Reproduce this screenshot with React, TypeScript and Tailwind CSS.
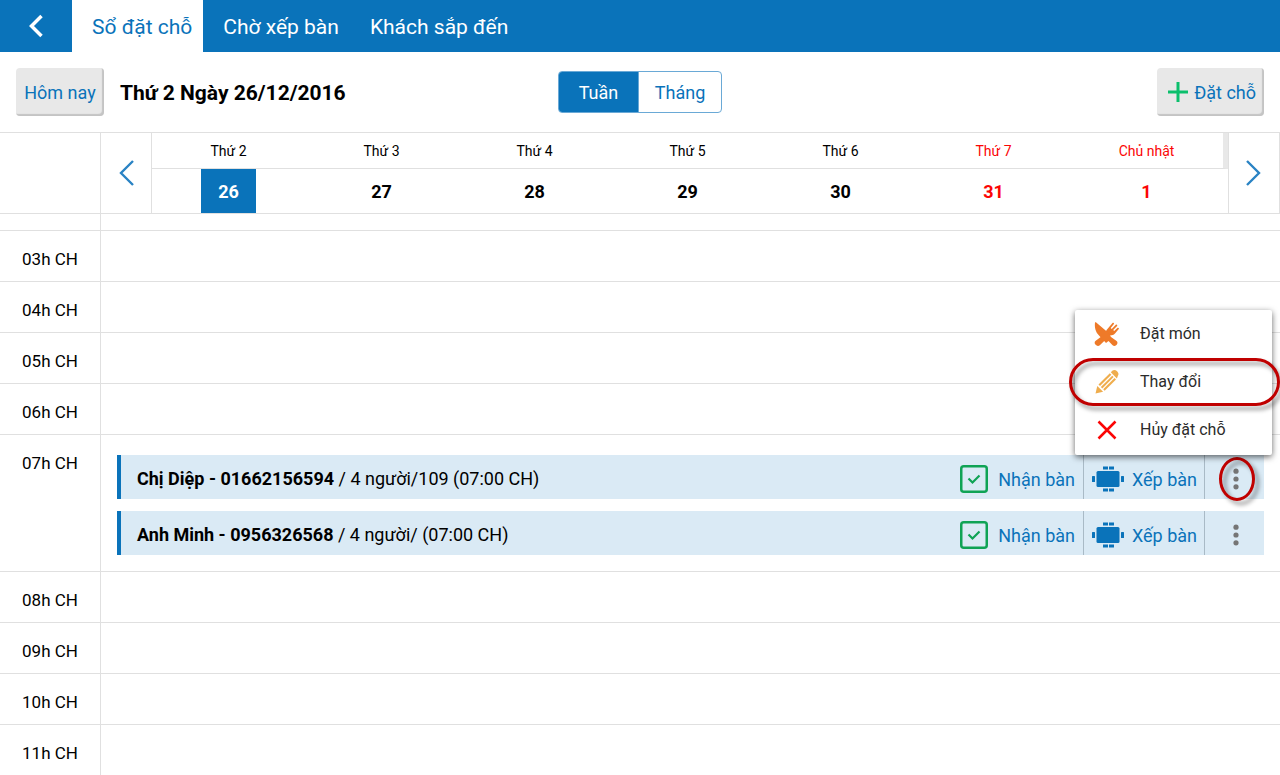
import React, { useState } from 'react';

interface Day {
  label: string;
  date: string;
  weekend?: boolean;
}

interface Booking {
  id: number;
  customer: string;
  detail: string;
}

interface Slot {
  label: string;
  bookings?: Booking[];
}

const TABS = ['Sổ đặt chỗ', 'Chờ xếp bàn', 'Khách sắp đến'];

const DAYS: Day[] = [
  { label: 'Thứ 2', date: '26' },
  { label: 'Thứ 3', date: '27' },
  { label: 'Thứ 4', date: '28' },
  { label: 'Thứ 5', date: '29' },
  { label: 'Thứ 6', date: '30' },
  { label: 'Thứ 7', date: '31', weekend: true },
  { label: 'Chủ nhật', date: '1', weekend: true },
];

const SLOTS: Slot[] = [
  { label: '03h CH' },
  { label: '04h CH' },
  { label: '05h CH' },
  { label: '06h CH' },
  {
    label: '07h CH',
    bookings: [
      { id: 1, customer: 'Chị Diệp - 01662156594', detail: ' / 4 người/109 (07:00 CH)' },
      { id: 2, customer: 'Anh Minh - 0956326568', detail: ' / 4 người/ (07:00 CH)' },
    ],
  },
  { label: '08h CH' },
  { label: '09h CH' },
  { label: '10h CH' },
  { label: '11h CH' },
];

const BackIcon = () => (
  <svg width="16" height="24" viewBox="0 0 16 24" fill="none" stroke="currentColor" strokeWidth="3.5">
    <path d="M13.5 2 3.5 12l10 10" />
  </svg>
);

const ArrowIcon = ({ flip }: { flip?: boolean }) => (
  <svg width="16" height="28" viewBox="0 0 16 28" fill="none" stroke="#2a83c4" strokeWidth="2.4">
    <path d={flip ? 'M1 2l12 12L1 26' : 'M15 2 3 14l12 12'} />
  </svg>
);

const PlusIcon = () => (
  <svg width="22" height="22" viewBox="0 0 22 22" fill="none" stroke="#0bbf6c" strokeWidth="3">
    <path d="M11 1v20M1 11h20" />
  </svg>
);

const CheckIcon = () => (
  <svg width="28" height="28" viewBox="0 0 28 28" fill="none" stroke="#0fa355">
    <rect x="1.25" y="1.25" width="25.5" height="25.5" rx="2.5" strokeWidth="2.5" />
    <path d="M8.5 13.5l4 4 7-7" strokeWidth="2.2" />
  </svg>
);

const TableIcon = () => (
  <svg width="32" height="26" viewBox="0 0 32 26" fill="#0a73ba">
    <rect x="4.5" y="5" width="23" height="16" rx="1.5" />
    <rect x="11" y="0.5" width="5" height="3" />
    <rect x="17" y="0.5" width="5" height="3" />
    <rect x="11" y="22.5" width="5" height="3" />
    <rect x="17" y="22.5" width="5" height="3" />
    <rect x="0" y="10" width="3" height="6" rx="0.5" />
    <rect x="29" y="10" width="3" height="6" rx="0.5" />
  </svg>
);

const MoreIcon = () => (
  <svg width="6" height="22" viewBox="0 0 6 22" fill="#757575">
    <circle cx="3" cy="3.2" r="2.6" />
    <circle cx="3" cy="11" r="2.6" />
    <circle cx="3" cy="18.8" r="2.6" />
  </svg>
);

const CutleryIcon = () => (
  <svg width="26" height="26" viewBox="0 0 26 26" fill="#ee7a29">
    {/* fork */}
    <path d="M13 8.500 18.500 2c.6-.8 2 .2 1.400 1.100L16.700 7l1 1 4.100-4.300c.8-.7 2 .3 1.300 1.200L19.200 9l1 1 3.400-3.200c.8-.6 1.800.5 1.200 1.300L21 12.500c-1.500 1.600-3.300 2-5 1.900L5.800 24.300c-1 1-2.500 1-3.500 0l-.9-.9c-1-1-1-2.500 0-3.500L12 12c-.3-1.300.1-2.500 1-3.500z" />
    {/* knife */}
    <path d="M1 1.500c.3-.3 1-.2 1.500.3L14 11.500l3 4.500 5.600 4c1.100.9 1.200 2.400.3 3.400l-.8.8c-1 1-2.500 1-3.500 0L14.500 20 12 22 5 14.500C1.500 11 .4 6 1 1.500z" />
  </svg>
);

const PencilIcon = () => (
  <svg width="26" height="26" viewBox="0 0 26 26" fill="#efad4d">
    <path d="M1.500 24.500 3.300 17l5.800 5.700z" />
    <path d="M4.500 15.600 15.800 4.300l1.500 1.500L6 17.100z" />
    <path d="M6.900 18 18.200 6.700l1.400 1.400L8.300 19.400z" />
    <path d="M9.200 20.300 20.500 9l1.500 1.500-11.300 11.300z" />
    <path d="M16.800 3.300 18.600 1.500c1.200-1 3-.8 4.500.7s1.800 3.300.8 4.500L22.900 9.400z" />
  </svg>
);

const CrossIcon = () => (
  <svg width="26" height="26" viewBox="0 0 26 26" fill="none" stroke="#fb0505" strokeWidth="2.500">
    <path d="M4.500 4.500l17 17M21.500 4.500l-17 17" />
  </svg>
);

const MENU_ITEMS = [
  { label: 'Đặt món', icon: <CutleryIcon /> },
  { label: 'Thay đổi', icon: <PencilIcon />, highlighted: true },
  { label: 'Hủy đặt chỗ', icon: <CrossIcon /> },
];

const BookingMenu = () => (
  <div
    role="menu"
    className="absolute bottom-full -right-2 z-10 w-[197px] rounded-xs bg-white pb-px shadow-[0_2px_6px_rgba(0,0,0,0.6)]"
  >
    {MENU_ITEMS.map((item) => (
      <button
        key={item.label}
        role="menuitem"
        className="relative flex h-12 w-full items-center gap-5 pl-[19px] text-base text-[#2b2b2b]"
      >
        {item.icon}
        {item.label}
        {item.highlighted && (
          <span className="pointer-events-none absolute -left-1.5 -right-2 top-0 h-12 rounded-full border-3 border-[#c00000] drop-shadow-[3px_4px_2px_rgba(0,0,0,0.4)]" />
        )}
      </button>
    ))}
  </div>
);

interface BookingRowProps {
  booking: Booking;
  menuOpen: boolean;
  onToggleMenu: () => void;
}

const BookingRow: React.FC<BookingRowProps> = ({ booking, menuOpen, onToggleMenu }) => (
  <div className="relative flex h-11 items-stretch border-l-4 border-[#0a73ba] bg-[#daeaf5]">
    <p className="flex-1 self-center whitespace-pre pl-4 pt-1 text-lg text-black">
      <strong className="font-bold">{booking.customer}</strong>
      {booking.detail}
    </p>
    <button className="flex items-center gap-2.5 px-2 pt-1 text-lg text-[#0a73ba]">
      <CheckIcon />
      <span className="pt-0.5">Nhận bàn</span>
    </button>
    <button className="flex items-center gap-2 border-x border-[#a9bac6] pl-2 pr-[7px] pt-1 text-lg text-[#0a73ba]">
      <TableIcon />
      <span className="pt-0.5">Xếp bàn</span>
    </button>
    <button
      aria-label="Thêm"
      onClick={onToggleMenu}
      className="relative flex w-[59px] items-center justify-center pl-0.5 pt-1"
    >
      <MoreIcon />
      {menuOpen && (
        <span className="pointer-events-none absolute left-3.5 top-0.5 h-11 w-9 rounded-[50%] border-3 border-[#c00000] drop-shadow-[4px_4px_2px_rgba(0,0,0,0.4)]" />
      )}
    </button>
    {menuOpen && <BookingMenu />}
  </div>
);

const App: React.FC = () => {
  const [activeTab, setActiveTab] = useState(TABS[0]);
  const [view, setView] = useState<'week' | 'month'>('week');
  const [selectedDate, setSelectedDate] = useState('26');
  const [openMenu, setOpenMenu] = useState<number | null>(1);

  return (
    <div className="min-h-screen overflow-x-hidden bg-white font-['Roboto',sans-serif] text-black">
      <header className="flex h-13 bg-[#0a73ba]">
        <button aria-label="Quay lại" className="flex w-18 items-center justify-center text-white">
          <BackIcon />
        </button>
        <nav className="flex">
          {TABS.map((tab) => (
            <button
              key={tab}
              onClick={() => setActiveTab(tab)}
              className={`pl-5 pr-[11px] pt-1 text-[21px] ${
                tab === activeTab ? 'bg-white text-[#0a73ba]' : 'text-white'
              }`}
            >
              {tab}
            </button>
          ))}
        </nav>
      </header>

      {/* Toolbar */}
      <div className="grid h-20 grid-cols-[1fr_auto_1fr] items-center px-4">
        <div className="flex items-center gap-4">
          <button className="h-12 w-22 rounded-sm bg-[#e8e8e8] pt-0.5 text-lg text-[#0a73ba] shadow-[inset_-2px_-2px_1px_#c4c4c4]">
            Hôm nay
          </button>
          <h1 className="pt-1 text-[21px] font-bold">Thứ 2 Ngày 26/12/2016</h1>
        </div>
        <div className="flex h-[42px] overflow-hidden rounded-sm border border-[#6aa9d6]">
          <button
            onClick={() => setView('week')}
            className={`w-[79px] pt-0.5 text-lg ${view === 'week' ? 'bg-[#0a73ba] text-white' : 'text-[#0a73ba]'}`}
          >
            Tuần
          </button>
          <button
            onClick={() => setView('month')}
            className={`w-[83px] border-l border-[#6aa9d6] pt-0.5 text-lg ${
              view === 'month' ? 'bg-[#0a73ba] text-white' : 'text-[#0a73ba]'
            }`}
          >
            Tháng
          </button>
        </div>
        <button className="flex h-12 items-center gap-[5px] justify-self-end rounded-sm bg-[#e8e8e8] pl-2.5 pr-2 text-lg text-[#0a73ba] shadow-[inset_-2px_-2px_1px_#c4c4c4]">
          <PlusIcon />
          <span className="pt-0.5">Đặt chỗ</span>
        </button>
      </div>

      {/* Week strip */}
      <div className="flex h-[82px] border-y border-[#e0e0e0]">
        <div className="w-[101px] border-r border-[#e0e0e0]" />
        <button
          aria-label="Tuần trước"
          className="flex w-[51px] items-center justify-center border-r border-[#e0e0e0]"
        >
          <ArrowIcon />
        </button>
        <div className="flex flex-1 flex-col">
          <div className="grid h-9 grid-cols-7 border-b border-r-5 border-[#e0e0e0] border-r-[#e8e8e8]">
            {DAYS.map((day) => (
              <span
                key={day.label}
                className={`self-center text-center text-sm ${day.weekend ? 'text-[#fb0505]' : ''}`}
              >
                {day.label}
              </span>
            ))}
          </div>
          <div className="grid h-11 grid-cols-7 pr-[5px]">
            {DAYS.map((day) => (
              <button
                key={day.date}
                onClick={() => setSelectedDate(day.date)}
                className={`w-[55px] justify-self-center pt-0.5 text-lg font-bold ${
                  day.date === selectedDate
                    ? 'bg-[#0a73ba] text-white'
                    : day.weekend
                      ? 'text-[#fb0505]'
                      : ''
                }`}
              >
                {day.date}
              </button>
            ))}
          </div>
        </div>
        <button
          aria-label="Tuần sau"
          className="flex w-[52px] items-center justify-center border-x border-[#e0e0e0]"
        >
          <ArrowIcon flip />
        </button>
      </div>

      {/* Hour slots, the first one is partly scrolled under the week strip */}
      <main>
        <div className="flex h-[17px] items-end overflow-hidden border-b border-[#e0e0e0]">
          <div className="h-[50px] w-[101px] shrink-0 border-r border-[#e0e0e0] pt-4 text-center text-[17px] leading-6">
            02h CH
          </div>
        </div>
        {SLOTS.map((slot) => (
          <div key={slot.label} className="flex border-b border-[#e0e0e0] last:border-b-0">
            <div className="min-h-[50px] w-[101px] shrink-0 border-r border-[#e0e0e0] pt-4 text-center text-[17px] leading-6">
              {slot.label}
            </div>
            {slot.bookings && (
              <div className="flex flex-1 flex-col gap-3 px-4 pb-4 pt-5">
                {slot.bookings.map((booking) => (
                  <BookingRow
                    key={booking.id}
                    booking={booking}
                    menuOpen={openMenu === booking.id}
                    onToggleMenu={() => setOpenMenu(openMenu === booking.id ? null : booking.id)}
                  />
                ))}
              </div>
            )}
          </div>
        ))}
      </main>
    </div>
  );
};

export default App;
